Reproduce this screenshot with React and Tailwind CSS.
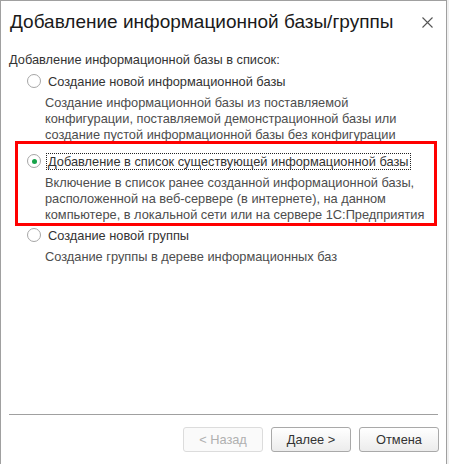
import React from "react";

const font = { fontFamily: '"Liberation Sans", Arial, sans-serif' };

function Radio({ checked }) {
  return (
    <span className="relative flex h-[14px] w-[14px] shrink-0 items-center justify-center rounded-full border border-[#a6a6a6] bg-white">
      {checked && <span className="h-[5px] w-[5px] rounded-full bg-[#17a34a]" />}
    </span>
  );
}

function Option({ checked, focused, label, lines }) {
  return (
    <div>
      <div className="flex h-[16px] items-center gap-[6px]">
        <Radio checked={checked} />
        <span
          className={
            "whitespace-nowrap px-[1px] leading-[15px] text-[#333] " +
            (focused ? "outline outline-1 outline-dotted outline-[#222]" : "")
          }
        >
          {label}
        </span>
      </div>
      <div className="mt-[6px] whitespace-nowrap pl-[18px] leading-[16px] text-[#4d4d4d]">
        {lines.map((l) => (
          <div key={l}>{l}</div>
        ))}
      </div>
    </div>
  );
}

function Button({ children, disabled }) {
  return (
    <button
      className={
        "h-[25px] w-[80px] rounded-[3px] border text-[12.8px] " +
        (disabled
          ? "border-[#dcdcdc] bg-[#fafafa] text-[#b0b0b0]"
          : "border-[#a9a9a9] bg-gradient-to-b from-white to-[#ececec] text-[#333]")
      }
    >
      {children}
    </button>
  );
}

export default function App() {
  return (
    <div className="h-[464px] w-[449px] overflow-hidden bg-[#f0f0f0]" style={font}>
      <div className="flex h-[464px] w-[447px] flex-col border-l border-r border-t border-[#a0a0a0] bg-white text-[12.8px]">
        <div className="flex items-center justify-between pl-[9px] pr-[13px] pt-[9px]">
          <h1 className="text-[19px] leading-[24px] text-[#1a1a1a]">
            Добавление информационной базы/группы
          </h1>
          <svg width="11" height="11" viewBox="0 0 11 11">
            <path d="M0.5 0.5L10.5 10.5M10.5 0.5L0.5 10.5" stroke="#555" strokeWidth="1.1" />
          </svg>
        </div>

        <div className="mt-[18px] pl-[8px] leading-[16px] text-[#333]">
          Добавление информационной базы в список:
        </div>

        <div className="mt-[5px] pl-[26px]">
          <Option
            label="Создание новой информационной базы"
            lines={[
              "Создание информационной базы из поставляемой",
              "конфигурации, поставляемой демонстрационной базы или",
              "создание пустой информационной базы без конфигурации",
            ]}
          />
        </div>

        <div className="ml-[14px] mr-[9px] -mt-[2px] border-[3px] border-[#ff0000] pl-[9px] pt-[9px]">
          <Option
            checked
            focused
            label="Добавление в список существующей информационной базы"
            lines={[
              "Включение в список ранее созданной информационной базы,",
              "расположенной на веб-сервере (в интернете), на данном",
              "компьютере, в локальной сети или на сервере 1С:Предприятия",
            ]}
          />
        </div>

        <div className="mt-[1px] pl-[26px]">
          <Option
            label="Создание новой группы"
            lines={["Создание группы в дереве информационных баз"]}
          />
        </div>

        <div className="flex-1" />

        <div className="mx-[8px] border-t border-[#a0a0a0]" />
        <div className="flex justify-end gap-[8px] pb-[12px] pr-[7px] pt-[12px]">
          <Button disabled>&lt; Назад</Button>
          <Button>Далее &gt;</Button>
          <Button>Отмена</Button>
        </div>
      </div>
    </div>
  );
}
